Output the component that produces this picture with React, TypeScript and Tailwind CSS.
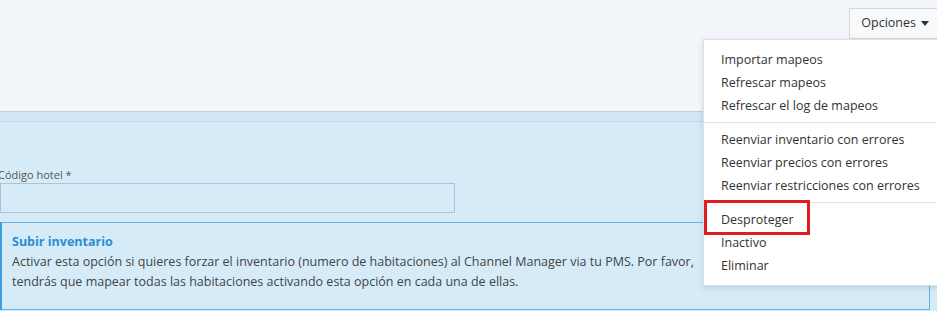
import React from "react";

const groups: string[][] = [
  ["Importar mapeos", "Refrescar mapeos", "Refrescar el log de mapeos"],
  [
    "Reenviar inventario con errores",
    "Reenviar precios con errores",
    "Reenviar restricciones con errores",
  ],
  ["Desproteger", "Inactivo", "Eliminar"],
];

const OptionsMenu: React.FC = () => (
  <div className="absolute top-[39px] left-[703px] w-[240px] bg-white border border-[#dde1e5] shadow-[0_2px_6px_rgba(0,0,0,0.12)] py-2 z-10">
    {groups.map((g, gi) => (
      <div key={gi}>
        {gi > 0 && <div className="h-px bg-[#e2e5e8] my-[5px]"></div>}
        {g.map((item) => (
          <div
            key={item}
            className="pl-[17px] h-[23px] leading-[23px] text-[12.5px] text-[#333] whitespace-nowrap"
          >
            {item}
          </div>
        ))}
      </div>
    ))}
    <div className="absolute left-0 top-[160px] w-[106px] h-[35px] border-[3px] border-[#e21c21]"></div>
  </div>
);

export default function App() {
  return (
    <div
      className="relative w-[937px] h-[311px] overflow-hidden bg-[#d5ecf8]"
      style={{ fontFamily: '"Open Sans", "Noto Sans", sans-serif' }}
    >
      <div className="h-[111px] bg-[#f2f6fa] flex justify-end items-start pt-2">
        <button className="h-[31px] pl-[11px] pr-2 -mr-px flex items-center gap-[5px] border border-[#d3d9de] bg-[#f7f9fb] text-[12.5px] text-[#333]">
          Opciones
          <svg width="8" height="5" viewBox="0 0 8 5">
            <path d="M0 0h8L4 5z" fill="#333" />
          </svg>
        </button>
      </div>
      <div className="border-t border-[#c9cdd1] h-[11px] bg-[#d1e6f4] border-b border-b-[#bfd7e8]"></div>
      <div className="pt-[45px]">
        <label className="block text-[11px] leading-[16px] text-[#555] -ml-[2px]">
          Código hotel *
        </label>
        <div className="w-[455px] h-[30px] border border-[#aac3d9] bg-[#d5ecf8]"></div>
        <div className="mt-[9px] w-[930px] h-[88px] border border-[#62b4ea] border-l-2 border-l-[#3d9fe2] pl-[10px] pt-[9px]">
          <div className="text-[12.5px] leading-[20px] font-bold text-[#2d8bd6]">
            Subir inventario
          </div>
          <p className="text-[12.5px] leading-[20px] text-[#444]">
            Activar esta opción si quieres forzar el inventario (numero de
            habitaciones) al Channel Manager via tu PMS. Por favor,
            <br />
            tendrás que mapear todas las habitaciones activando esta opción
            en cada una de ellas.
          </p>
        </div>
      </div>
      <OptionsMenu />
    </div>
  );
}
